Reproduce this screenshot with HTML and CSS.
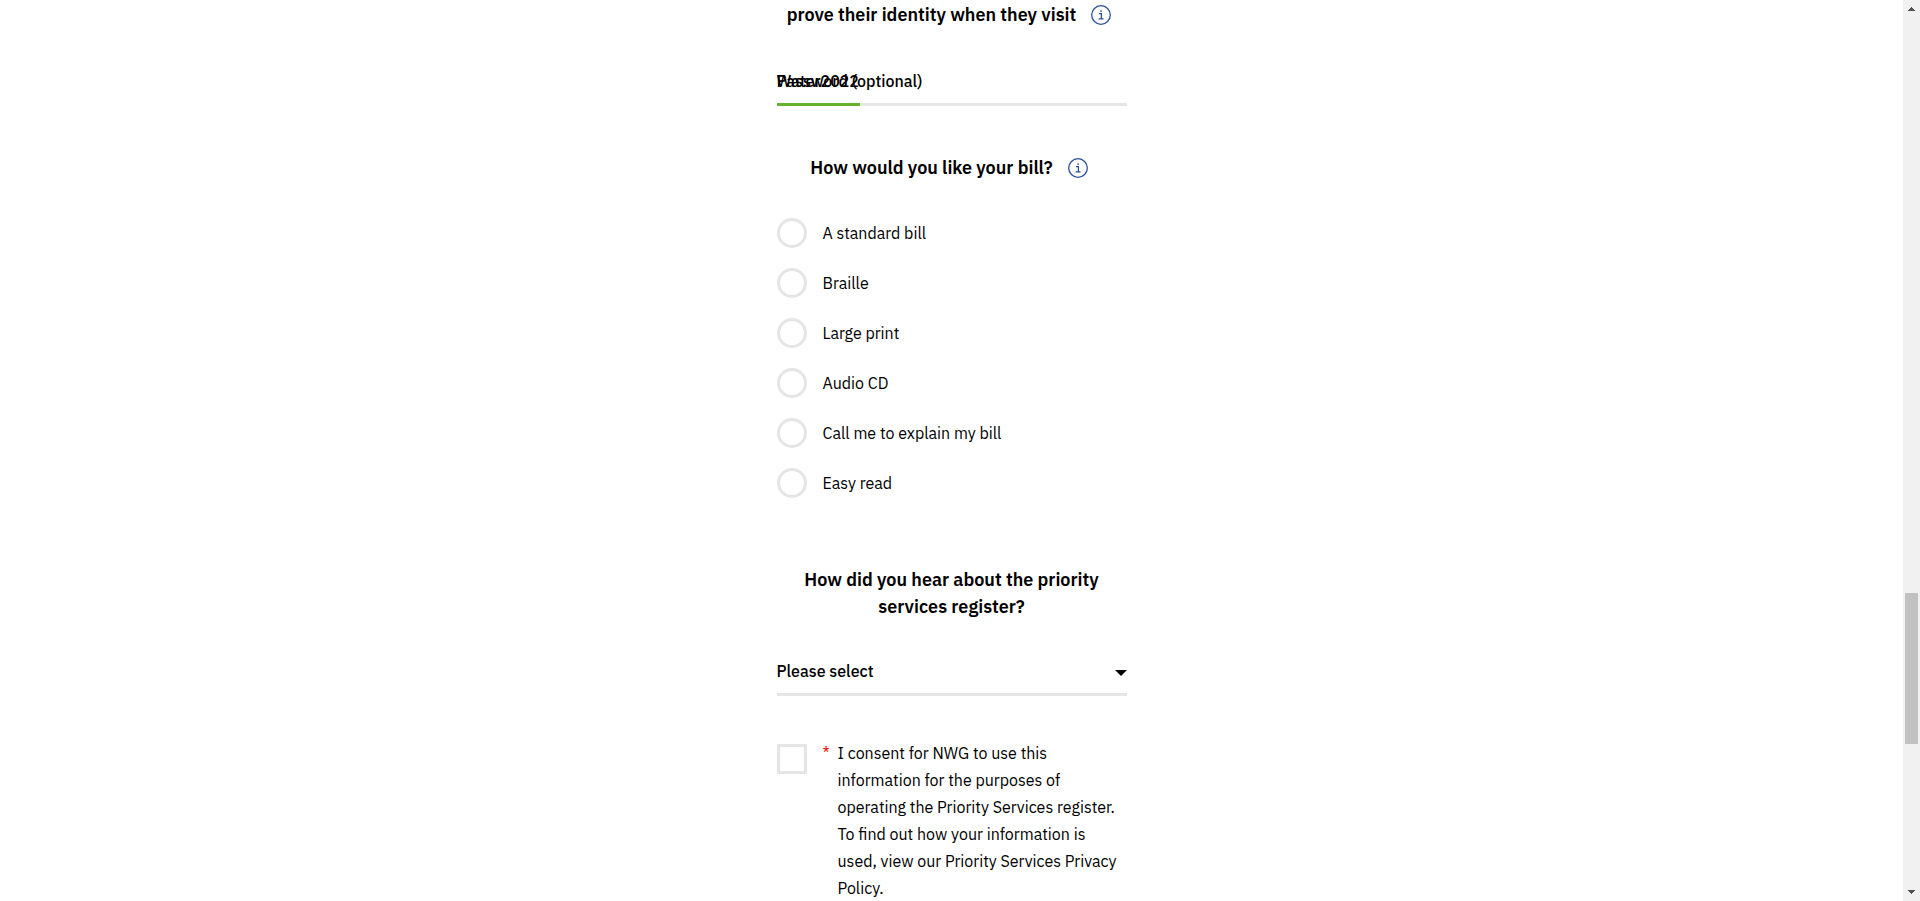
FILE: index.html
```html
<!DOCTYPE html>
<html lang="en">
<head>
<meta charset="utf-8">
<meta name="viewport" content="width=device-width, initial-scale=1">
<title>Priority services register</title>
<link rel="stylesheet" href="styles.css">
</head>
<body class="page">
<main class="content">
  <form class="form">
    <h2 class="heading heading-password">
      <span>prove their identity when they visit</span>
      <button class="info" type="button" aria-label="More information about passwords">
        <svg viewBox="0 0 20 20" width="20" height="20" aria-hidden="true"><circle cx="10" cy="10" r="9.3"/><path d="M8 8.6h2.4v5.2M7.6 13.8h5"/><circle class="dot" cx="10.1" cy="6.1" r="0.9"/></svg>
      </button>
    </h2>

    <div class="field field-password">
      <label class="field-label" for="password">Password (optional)</label>
      <input class="field-input" id="password" type="text" value="Water2022">
    </div>

    <h2 class="heading heading-bill" id="bill-heading">
      <span>How would you like your bill?</span>
      <button class="info" type="button" aria-label="More information about bills">
        <svg viewBox="0 0 20 20" width="20" height="20" aria-hidden="true"><circle cx="10" cy="10" r="9.3"/><path d="M8 8.6h2.4v5.2M7.6 13.8h5"/><circle class="dot" cx="10.1" cy="6.1" r="0.9"/></svg>
      </button>
    </h2>

    <div class="options" role="radiogroup" aria-labelledby="bill-heading">
      <label class="option"><input class="box radio" type="radio" name="bill">A standard bill</label>
      <label class="option"><input class="box radio" type="radio" name="bill">Braille</label>
      <label class="option"><input class="box radio" type="radio" name="bill">Large print</label>
      <label class="option"><input class="box radio" type="radio" name="bill">Audio CD</label>
      <label class="option"><input class="box radio" type="radio" name="bill">Call me to explain my bill</label>
      <label class="option"><input class="box radio" type="radio" name="bill">Easy read</label>
    </div>

    <h2 class="heading heading-source"><label for="source">How did you hear about the priority services register?</label></h2>

    <div class="select-field">
      <select class="select" id="source"><option>Please select</option></select>
      <svg class="caret" viewBox="0 0 12 6" width="12" height="6" aria-hidden="true"><path d="M0 0h12L6 6z"/></svg>
    </div>

    <div class="consent">
      <input class="box" id="consent" type="checkbox" required>
      <label class="consent-label" for="consent"><span class="required">*</span><span>I consent for NWG to use this information for the purposes of operating the Priority Services register. To find out how your information is used, view our Priority Services Privacy Policy.</span></label>
    </div>
  </form>
</main>
<div class="scrollbar" aria-hidden="true">
  <svg class="scroll-arrow" viewBox="0 0 17 17"><path d="M5 11V10h1V9h1V8h1V7h1v1h1v1h1v1h1v1z"/></svg>
  <div class="scroll-track"><div class="scroll-thumb"></div></div>
  <svg class="scroll-arrow" viewBox="0 0 17 17"><path d="M5 6v1h1v1h1v1h1v1h1V9h1V8h1V7h1V6z"/></svg>
</div>
</body>
</html>
```
FILE: styles.css
```css
* {
  box-sizing: border-box;
}

.page {
  display: flex;
  height: 100vh;
  margin: 0;
  overflow: hidden;
  background: #fff;
  color: #000;
  font: 400 16px/27px "IBM Plex Sans", Roboto, sans-serif;
}

.content {
  flex: 1;
  min-width: 0;
}

.form {
  width: 100%;
  max-width: 350px;
  margin: 0 auto;
}

.heading {
  display: flex;
  justify-content: center;
  align-items: center;
  gap: 15px;
  margin: 0;
  font-size: 18px;
  font-weight: 600;
  line-height: 27px;
  text-align: center;
}

.heading-password {
  padding: 1px 5px 0 0;
}

.heading-bill {
  margin-top: 48px;
  padding-right: 5px;
}

.heading-source {
  margin-top: 68px;
  padding: 0 20px;
}

.info {
  display: flex;
  padding: 0;
  border: 0;
  background: none;
}

.info svg {
  fill: none;
  stroke: #2a4f9e;
  stroke-width: 1.3;
}

.info .dot {
  fill: #2a4f9e;
  stroke: none;
}

.field {
  display: grid;
  margin-top: 39px;
  border-bottom: 3px solid #e5e5e5;
}

.field-label,
.field-input {
  grid-area: 1 / 1;
  font: inherit;
  font-weight: 500;
}

.field-label {
  padding-top: 1px;
}

.field-input {
  width: 83px;
  height: 39px;
  margin-bottom: -3px;
  padding: 0 0 8px;
  border: 0;
  border-bottom: 3px solid #64b22e;
  outline: 0;
  background: none;
  color: #000;
}

.options {
  display: grid;
  gap: 20px;
  margin-top: 37px;
}

.option {
  display: flex;
  align-items: center;
  gap: 16px;
}

.box {
  flex: none;
  appearance: none;
  width: 30px;
  height: 30px;
  margin: 0;
  border: 3px solid #e5e5e5;
  background: #fff;
}

.radio {
  border-radius: 50%;
}

.select-field {
  display: grid;
  align-items: center;
  margin-top: 32px;
  border-bottom: 3px solid #e5e5e5;
}

.select {
  grid-area: 1 / 1;
  appearance: none;
  width: 100%;
  height: 41px;
  padding: 0 20px 2px 0;
  border: 0;
  background: none;
  color: #000;
  font: inherit;
  font-weight: 500;
}

.caret {
  grid-area: 1 / 1;
  justify-self: end;
  pointer-events: none;
}

.consent {
  display: flex;
  align-items: flex-start;
  gap: 16px;
  margin-top: 48px;
}

.consent-label {
  display: flex;
  margin-top: -4px;
}

.required {
  flex: none;
  width: 15px;
  color: #f00;
}

.scrollbar {
  display: flex;
  flex-direction: column;
  width: 17px;
  background: #f1f1f1;
}

.scroll-arrow {
  width: 17px;
  height: 17px;
  fill: #505050;
}

.scroll-track {
  flex: 1;
  padding: 0 2px;
}

.scroll-track::before {
  content: "";
  display: block;
  height: 66.4%;
}

.scroll-thumb {
  height: 17.4%;
  background: #c1c1c1;
}
```
